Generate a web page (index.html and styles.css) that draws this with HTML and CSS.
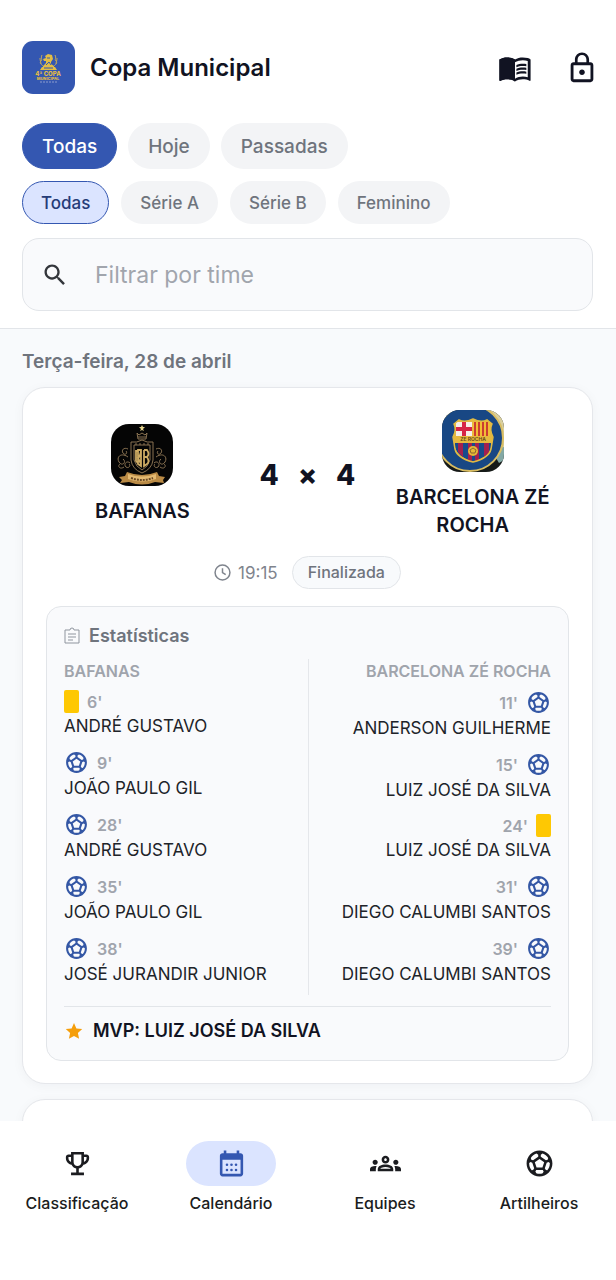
FILE: index.html
```
<!DOCTYPE html>
<html lang="pt-BR">
<head>
<meta charset="utf-8">
<meta name="viewport" content="width=device-width, initial-scale=1">
<title>Copa Municipal</title>
<link rel="stylesheet" href="styles.css">
</head>
<body>
<svg class="sprite" aria-hidden="true">
  <symbol id="ball" viewBox="0 0 24 24"><path d="M12 2C6.48 2 2 6.48 2 12s4.48 10 10 10 10-4.48 10-10S17.52 2 12 2zm1 3.3l1.35-.95c1.82.56 3.37 1.76 4.38 3.34l-.39 1.34-1.35.46L13 6.7V5.3zm-3.35-.95L11 5.3v1.4L7.01 9.49l-1.35-.46-.39-1.34c1.01-1.57 2.56-2.77 4.38-3.34zM7.08 17.11l-1.14.1C4.73 15.81 4 13.99 4 12c0-.12.01-.23.02-.35l1-.73 1.38.48 1.46 4.34-.78 1.37zm7.42 2.48c-.79.26-1.63.41-2.5.41s-1.71-.15-2.5-.41l-.69-1.49.64-1.1h5.11l.64 1.11-.7 1.48zM14.27 15H9.73l-1.35-4.02L12 8.44l3.63 2.54L14.27 15zm3.79 2.21l-1.14-.1-.79-1.37 1.46-4.34 1.39-.47 1 .73c.01.11.02.22.02.34 0 1.99-.73 3.81-1.94 5.21z"/></symbol>
</svg>
<div class="app">
  <header class="top">
    <div class="brand">
      <svg class="brand-logo" viewBox="0 0 53 53" role="img" aria-label="4ª Copa Municipal">
        <rect width="53" height="53" rx="11" fill="#3457b1"/>
        <g fill="#e3bd45">
          <path d="M23 15l3-2 4 1 1 4-2 3v2l3 2v2H21v-2l3-3v-2h-2l-1-2 3-1z"/>
          <path d="M20 26h13l2 3H18z"/>
        </g>
        <path d="M25 17h3M24 24l3-3 2 3M22 27h9" stroke="#3457b1" fill="none"/>
        <path d="M20 14c-2 3 1 4-1 6s1 4 2 5M33 14c2 3-1 4 1 6s-1 4-2 5M18 17c0 3 1 4 1 6M35 17c0 3-1 4-1 6" stroke="#c3a95c" fill="none"/>
        <text class="logo-copa" x="26" y="35" text-anchor="middle">4ª COPA</text>
        <text class="logo-municipal" x="26" y="39" text-anchor="middle">MUNICIPAL</text>
        <path d="M18 41h17" stroke="#8c9dce" stroke-dasharray="2 1"/>
      </svg>
      <h1>Copa Municipal</h1>
      <button class="icon-button" aria-label="Regulamento"><svg viewBox="0 0 24 24"><path d="M21 5c-1.11-.35-2.33-.5-3.5-.5-1.95 0-4.05.4-5.5 1.5-1.45-1.1-3.55-1.5-5.5-1.5S2.45 4.9 1 6v14.65c0 .25.25.5.5.5.1 0 .15-.05.25-.05C3.1 20.45 5.05 20 6.5 20c1.95 0 4.05.4 5.5 1.5 1.35-.85 3.8-1.5 5.5-1.5 1.65 0 3.35.3 4.75 1.05.1.05.15.05.25.05.25 0 .5-.25.5-.5V6c-.6-.45-1.25-.75-2-1zm0 13.5c-1.1-.35-2.3-.5-3.5-.5-1.7 0-4.15.65-5.5 1.5V8c1.35-.85 3.8-1.5 5.5-1.5 1.2 0 2.4.15 3.5.5v11.5z"/><path d="M1 6C2.450 4.900 4.550 4.500 6.500 4.500S10.550 4.900 12 6v15.500C10.550 20.400 8.450 20 6.500 20S2.500 20.500 1 21z"/><path d="M17.5 10.5c.88 0 1.73.09 2.5.26V9.24c-.79-.15-1.64-.24-2.5-.24-1.7 0-3.24.29-4.5.83v1.66c1.13-.64 2.7-.99 4.5-.99zM13 12.49v1.66c1.13-.64 2.7-.99 4.5-.99.88 0 1.73.09 2.5.26V11.9c-.79-.15-1.64-.24-2.5-.24-1.7 0-3.24.3-4.5.83zm4.5 1.84c-1.7 0-3.24.29-4.5.83v1.66c1.13-.64 2.7-.99 4.5-.99.88 0 1.73.09 2.5.26v-1.52c-.79-.16-1.64-.24-2.5-.24z"/></svg></button>
      <button class="icon-button" aria-label="Área restrita"><svg viewBox="0 0 24 24"><path d="M12 17c1.1 0 2-.9 2-2s-.9-2-2-2-2 .9-2 2 .9 2 2 2zm6-9h-1V6c0-2.76-2.24-5-5-5S7 3.24 7 6v2H6c-1.1 0-2 .9-2 2v10c0 1.1.9 2 2 2h12c1.1 0 2-.9 2-2V10c0-1.1-.9-2-2-2zM8.9 6c0-1.71 1.39-3.1 3.1-3.1s3.1 1.39 3.1 3.1v2H8.9V6zM18 20H6V10h12v10z"/></svg></button>
    </div>
    <div class="chips chips-period">
      <button class="chip active">Todas</button>
      <button class="chip">Hoje</button>
      <button class="chip">Passadas</button>
    </div>
    <div class="chips chips-series">
      <button class="chip active">Todas</button>
      <button class="chip">Série A</button>
      <button class="chip">Série B</button>
      <button class="chip">Feminino</button>
    </div>
    <label class="search">
      <svg viewBox="0 0 24 24" aria-hidden="true"><path d="M15.5 14h-.79l-.28-.27C15.41 12.59 16 11.11 16 9.5 16 5.91 13.09 3 9.5 3S3 5.91 3 9.5 5.91 16 9.5 16c1.61 0 3.09-.59 4.23-1.57l.27.28v.79l5 4.99L20.49 19l-4.99-5zm-6 0C7.01 14 5 11.99 5 9.5S7.01 5 9.5 5 14 7.01 14 9.5 11.99 14 9.5 14z"/></svg>
      <input type="text" placeholder="Filtrar por time" aria-label="Filtrar por time">
    </label>
  </header>

  <main class="matches">
    <h2 class="date">Terça-feira, 28 de abril</h2>
    <article class="match">
      <div class="scoreboard">
        <div class="team">
          <svg class="crest" viewBox="0 0 62 62" role="img" aria-label="Escudo Bafanas">
            <rect width="62" height="62" rx="18" fill="#050505"/>
            <path d="M31 1l1 2h2l-2 2 1 2-2-1-2 1 1-2-2-2h2z" fill="#e5d48d"/>
            <g fill="none" stroke="#8a7352">
              <path d="M26 9l2 2 3-2 3 2 2-2-1 6h-8zM27 13h8M20 18q6 1 11-2 5 3 11 2v18q-1 9-11 13-10-4-11-13zM23 21h16v15q-2 7-8 10-6-3-8-10z"/>
              <path d="M17 25c-4-2-7 1-5 4s5 0 3-2M17 33c-7-5-12 0-9 5s8 0 4-3M19 39c-3-3-7 1-4 4 3 2 5-2 3-3M13 43c-4 3-7-1-4-3M45 25c4-2 7 1 5 4s-5 0-3-2M45 33c7-5 12 0 9 5s-8 0-4-3M43 39c3-3 7 1 4 4-3 2-5-2-3-3M49 43c4 3 7-1 4-3"/>
              <path d="M24 20h14" stroke-dasharray="2 2"/>
            </g>
            <path d="M27 26v14l3 2V26zM27 27h-2v10l2 2M30 27q-1 6-3 7l3 6M33 26v16l3-2q3-2 0-7 3-3 0-7h-3M33 33h4" fill="none" stroke="#cdab63" stroke-width="1.8"/>
            <path d="M8 53l6-1 2-4q15 6 30 0l2 4 6 1-2 3 1 3-9-1q-13 5-26 0l-9 1 2-3z" fill="#b98a45"/>
            <path d="M17 50q14 5 28 0v5q-14 5-28 0z" fill="#e3b971"/>
            <path d="M20 54q11 4 22 0" fill="none" stroke="#6b4a25" stroke-width="2" stroke-dasharray="2 1"/>
          </svg>
          <h3>BAFANAS</h3>
        </div>
        <p class="score"><span>4</span><span>×</span><span>4</span></p>
        <div class="team">
          <svg class="crest" viewBox="0 0 62 62" role="img" aria-label="Escudo Barcelona Zé Rocha">
            <clipPath id="crest-round"><rect width="62" height="62" rx="18"/></clipPath>
            <g clip-path="url(#crest-round)">
              <rect width="62" height="62" fill="#161a18"/>
              <path d="M46 0h16v40l-5 7z" fill="#d9cf9d"/>
              <path d="M57 38l5-1v13l-5 3-3-5z" fill="#83a8a4"/>
              <circle cx="28" cy="28" r="33" fill="#184784" stroke="#d9bd62" stroke-width="2"/>
            </g>
            <clipPath id="shield"><path d="M12 14l5-4q6 3 14-1 8 4 14 1l5 4q-3 6 1 13-1 6-2 12-2 9-18 13-16-4-18-13-1-6-2-12 4-7 1-13z"/></clipPath>
            <g clip-path="url(#shield)">
              <path d="M8 6h46v50H8z" fill="#e6b93f"/>
              <path d="M14 12h16v14H14z" fill="#f7eee9"/>
              <path d="M20 12h4v14h-4zM14 17h16v4H14z" fill="#d72446"/>
              <path d="M31 12h17v14H31z" fill="#f2bd35"/>
              <path d="M33 12v14M37 12v14M41 12v14M45 12v14" stroke="#cb3d31" stroke-width="2"/>
              <path d="M13 33h36v5q-2 9-18 14-15-5-18-14z" fill="#174b8c"/>
              <path d="M16 33h5v14l-5-5zM26 33h4v18l-4-1zM33 33h4v17l-4 2zM42 33h5v10l-5 4z" fill="#a3204f"/>
              <circle cx="31" cy="41" r="5" fill="#e4b836"/>
              <path d="M28 40l3-2 3 2-1 3h-4z" fill="none" stroke="#8c6730"/>
            </g>
            <path d="M12 14l5-4q6 3 14-1 8 4 14 1l5 4q-3 6 1 13-1 6-2 12-2 9-18 13-16-4-18-13-1-6-2-12 4-7 1-13z" fill="none" stroke="#e2ba42" stroke-width="1.5"/>
            <text class="crest-name" x="31" y="31" text-anchor="middle">ZE ROCHA</text>
          </svg>
          <h3>BARCELONA ZÉ ROCHA</h3>
        </div>
      </div>
      <div class="meta">
        <svg class="clock" viewBox="0 0 16 16" aria-hidden="true"><circle cx="8" cy="8" r="7"/><path d="M8 4v4l3 2"/></svg>
        <time datetime="19:15">19:15</time>
        <span class="status">Finalizada</span>
      </div>
      <section class="stats">
        <h4 class="stats-title"><svg viewBox="0 0 16 18" aria-hidden="true"><path d="M6 3H1v13h14V3h-5a2 2 0 0 0-4 0zM4 7h8M4 10h8M4 13h5"/></svg>Estatísticas</h4>
        <div class="events">
          <div class="side">
            <h5>BAFANAS</h5>
            <ul>
              <li><div class="event"><span class="yellow-card"></span><span>6'</span></div><p>ANDRÉ GUSTAVO</p></li>
              <li><div class="event"><svg class="goal"><use href="#ball"/></svg><span>9'</span></div><p>JOÃO PAULO GIL</p></li>
              <li><div class="event"><svg class="goal"><use href="#ball"/></svg><span>28'</span></div><p>ANDRÉ GUSTAVO</p></li>
              <li><div class="event"><svg class="goal"><use href="#ball"/></svg><span>35'</span></div><p>JOÃO PAULO GIL</p></li>
              <li><div class="event"><svg class="goal"><use href="#ball"/></svg><span>38'</span></div><p>JOSÉ JURANDIR JUNIOR</p></li>
            </ul>
          </div>
          <div class="side away">
            <h5>BARCELONA ZÉ ROCHA</h5>
            <ul>
              <li><div class="event"><svg class="goal"><use href="#ball"/></svg><span>11'</span></div><p>ANDERSON GUILHERME</p></li>
              <li><div class="event"><svg class="goal"><use href="#ball"/></svg><span>15'</span></div><p>LUIZ JOSÉ DA SILVA</p></li>
              <li><div class="event"><span class="yellow-card"></span><span>24'</span></div><p>LUIZ JOSÉ DA SILVA</p></li>
              <li><div class="event"><svg class="goal"><use href="#ball"/></svg><span>31'</span></div><p>DIEGO CALUMBI SANTOS</p></li>
              <li><div class="event"><svg class="goal"><use href="#ball"/></svg><span>39'</span></div><p>DIEGO CALUMBI SANTOS</p></li>
            </ul>
          </div>
        </div>
        <p class="mvp"><svg viewBox="0 0 20 20" aria-hidden="true"><path d="M10 2l2.4 5.4 5.8.6-4.3 4 1.2 5.8L10 14.9l-5.1 2.9L6.1 12 1.8 8l5.8-.6z"/></svg>MVP: LUIZ JOSÉ DA SILVA</p>
      </section>
    </article>
    <article class="match next-match"></article>
  </main>

  <nav class="tabs">
    <a href="#classificacao"><span class="tab-icon"><svg viewBox="0 0 24 24"><path d="M19 5h-2V3H7v2H5c-1.1 0-2 .9-2 2v1c0 2.55 1.92 4.63 4.39 4.94.63 1.5 1.98 2.63 3.61 2.96V19H7v2h10v-2h-4v-3.1c1.63-.33 2.98-1.46 3.61-2.96C19.08 12.63 21 10.55 21 8V7c0-1.1-.9-2-2-2zM5 8V7h2v3.82C5.84 10.4 5 9.3 5 8zm7 6c-1.65 0-3-1.35-3-3V5h6v6c0 1.65-1.35 3-3 3zm7-6c0 1.3-.84 2.4-2 2.82V7h2v1z"/></svg></span>Classificação</a>
    <a href="#calendario" class="current" aria-current="page"><span class="tab-icon"><svg viewBox="0 0 24 24"><path d="M19 4h-1V2h-2v2H8V2H6v2H5c-1.11 0-1.99.9-1.99 2L3 20c0 1.1.89 2 2 2h14c1.1 0 2-.9 2-2V6c0-1.1-.9-2-2-2zm0 16H5V9h14v11z"/><circle cx="8.500" cy="13" r="1"/><circle cx="12" cy="13" r="1"/><circle cx="15.500" cy="13" r="1"/><circle cx="8.500" cy="17" r="1"/><circle cx="12" cy="17" r="1"/><circle cx="15.500" cy="17" r="1"/></svg></span>Calendário</a>
    <a href="#equipes"><span class="tab-icon"><svg viewBox="0 0 24 24"><path d="M4 13c1.1 0 2-.9 2-2s-.9-2-2-2-2 .9-2 2 .9 2 2 2zm1.13 1.1c-.37-.06-.74-.1-1.13-.1-.99 0-1.93.21-2.78.58C.48 14.9 0 15.62 0 16.43V18h4.5v-1.61c0-.83.23-1.61.63-2.29zM20 13c1.1 0 2-.9 2-2s-.9-2-2-2-2 .9-2 2 .9 2 2 2zm4 3.43c0-.81-.48-1.53-1.22-1.85-.85-.37-1.79-.58-2.78-.58-.39 0-.76.04-1.13.1.4.68.63 1.46.63 2.29V18H24v-1.57zm-7.76-2.78c-1.17-.52-2.61-.9-4.24-.9s-3.07.39-4.24.9C6.68 14.13 6 15.21 6 16.39V18h12v-1.61c0-1.18-.68-2.26-1.76-2.74zM8.07 16c.09-.23.13-.39.91-.69.97-.38 1.99-.56 3.02-.56s2.05.18 3.02.56c.77.3.81.46.91.69H8.07zM12 8c.55 0 1 .45 1 1s-.45 1-1 1-1-.45-1-1 .45-1 1-1m0-2c-1.66 0-3 1.34-3 3s1.34 3 3 3 3-1.34 3-3-1.34-3-3-3z"/></svg></span>Equipes</a>
    <a href="#artilheiros"><span class="tab-icon"><svg><use href="#ball"/></svg></span>Artilheiros</a>
  </nav>
</div>
</body>
</html>
```
FILE: styles.css
```
* { box-sizing: border-box; }
body, h1, h2, h3, h4, h5, p, ul { margin: 0; padding: 0; }
body { font-family: Inter, "Liberation Sans", sans-serif; color: #111322; background: #fff; }
button, input { font: inherit; color: inherit; border: 0; margin: 0; }
ul { list-style: none; }
svg { display: block; flex: none; fill: currentColor; }
.sprite { display: none; }

.app { display: flex; flex-direction: column; height: 100vh; }

.top { padding: 41px 23px 17px 22px; border-bottom: 1px solid #e2e5e9; }
.brand { display: flex; align-items: center; margin-bottom: 29px; }
.brand-logo { width: 53px; height: 53px; margin-right: 15px; }
.logo-copa { font-size: 6px; font-weight: 800; fill: #e3bd45; }
.logo-municipal { font-size: 4px; font-weight: 800; fill: #e3bd45; }
.brand h1 { flex: 1; font-size: 24px; line-height: 32px; font-weight: 600; }
.icon-button { padding: 0; background: none; margin-left: 33px; }
.icon-button:last-child { margin-right: -6px; }
.icon-button svg { width: 34px; height: 34px; }

.chips { display: flex; gap: 12px; margin-bottom: 12px; }
.chip { border: 1px solid transparent; border-radius: 23px; background: #f3f4f6; color: #6f747d; font-weight: 500; }
.chips-period .chip { height: 46px; padding: 0 19px; font-size: 19px; }
.chips-series .chip { height: 43px; padding: 0 18px; font-size: 17px; }
.chips-period .active { background: #3457b1; border-color: #3457b1; color: #fff; }
.chips-series .active { background: #dbe4ff; border-color: #3457b1; color: #253c78; }
.chips-period { gap: 11px; }
.chips-series { margin-bottom: 14px; }

.search { display: flex; align-items: center; height: 73px; padding: 0 18px; border: 1px solid #e2e5e9; border-radius: 17px; background: #f9fafc; }
.search svg { width: 28px; height: 28px; color: #33363b; margin-right: 26px; }
.search input { flex: 1; min-width: 0; padding: 0; background: none; outline: 0; font-size: 23px; }
.search input::placeholder { color: #a1a5ad; opacity: 1; }

.matches { flex: 1; min-height: 0; overflow-y: auto; scrollbar-width: none; padding: 20px 23px 0 22px; background: #f8fafc; }
.date { font-size: 19px; line-height: 26px; font-weight: 600; color: #6f747d; margin-bottom: 12px; }
.match { padding: 22px 23px; border: 1px solid #e5e7eb; border-radius: 23px; background: #fff; box-shadow: 0 2px 12px rgba(17, 24, 39, .04); }
.next-match { min-height: 400px; margin-top: 15px; }

.scoreboard { display: grid; grid-template-columns: 7fr 5fr 7fr; align-items: center; }
.team { display: flex; flex-direction: column; align-items: center; gap: 11px; text-align: center; }
.team h3 { font-size: 20px; line-height: 28px; font-weight: 600; }
.crest { width: 62px; height: 62px; }
.crest-name { font-size: 5px; font-weight: 600; fill: #624516; }
.score { display: flex; justify-content: center; gap: 19px; font-size: 28px; line-height: 36px; font-weight: 800; }

.meta { display: flex; align-items: center; justify-content: center; margin: 17px 0; color: #7f848d; font-size: 17px; }
.clock { width: 17px; height: 17px; margin-right: 7px; fill: none; stroke: currentColor; stroke-width: 1.4; }
.status { margin-left: 14px; padding: 0 15px; border: 1px solid #e2e5e9; border-radius: 17px; background: #f8fafc; font-size: 16px; line-height: 31px; font-weight: 500; color: #6f747d; }

.stats { padding: 17px; border: 1px solid #e2e5e9; border-radius: 15px; background: #f9fafc; }
.stats-title { display: flex; align-items: center; gap: 9px; font-size: 18px; line-height: 24px; font-weight: 600; color: #6f747d; margin-bottom: 11px; }
.stats-title svg { width: 16px; height: 18px; fill: none; stroke: #8f959e; }
.events { display: grid; grid-template-columns: 1fr 1fr; }
.side h5 { font-size: 16px; line-height: 24px; font-weight: 600; color: #a0a4ac; margin-bottom: 7px; }
.side li { padding-bottom: 11px; }
.side li:last-child { padding-bottom: 8px; }
.side p { font-size: 17px; line-height: 26px; color: #202329; }
.away { border-left: 1px solid #e5e7eb; text-align: right; }
.event { display: flex; align-items: center; gap: 8px; font-size: 16px; font-weight: 600; color: #a0a4ac; }
.away .event { flex-direction: row-reverse; }
.goal { width: 25px; height: 25px; color: #3457a5; }
.yellow-card { width: 15px; height: 23px; border-radius: 2px; background: #fec803; }
.mvp { display: flex; align-items: center; gap: 9px; margin-top: 11px; padding-top: 12px; border-top: 1px solid #e2e5e9; font-size: 18px; line-height: 24px; font-weight: 600; }
.mvp svg { width: 20px; height: 20px; color: #f59e0b; }

.tabs { display: grid; grid-template-columns: repeat(4, 1fr); padding: 20px 0 65px; background: #fff; }
.tabs a { display: flex; flex-direction: column; align-items: center; gap: 5px; color: #1b1c20; text-decoration: none; font-size: 16px; line-height: 24px; font-weight: 500; }
.tab-icon { display: flex; align-items: center; justify-content: center; width: 90px; height: 45px; border-radius: 23px; }
.tab-icon svg { width: 31px; height: 31px; }
.current .tab-icon { background: #dbe4ff; color: #3457b1; }
```
